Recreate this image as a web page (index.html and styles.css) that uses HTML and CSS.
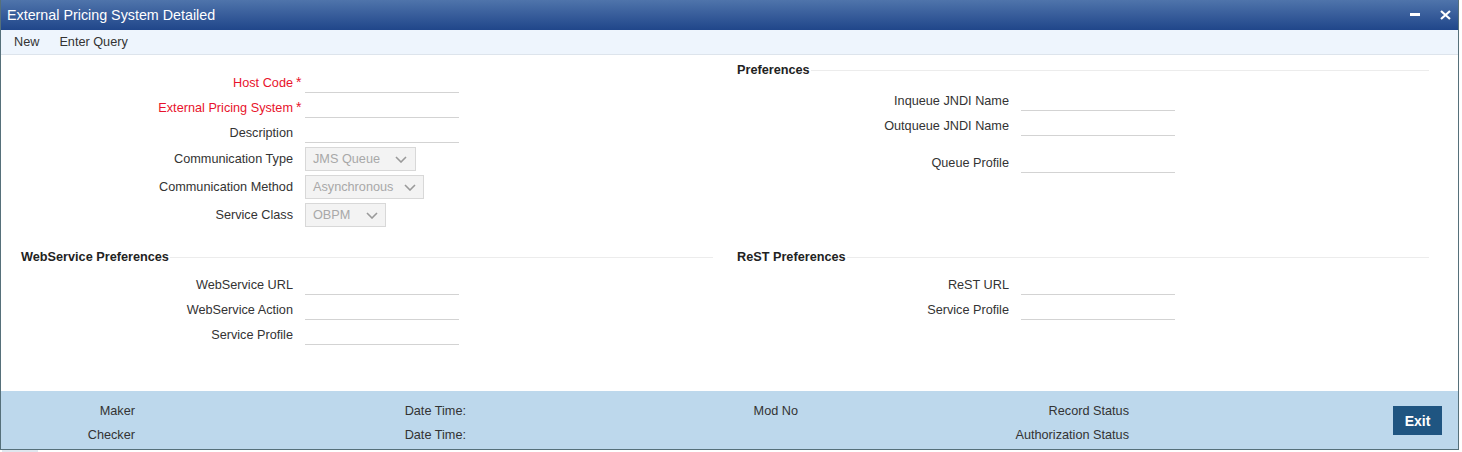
FILE: index.html
```html
<!DOCTYPE html>
<html lang="en">
<head>
<meta charset="utf-8">
<title>External Pricing System Detailed</title>
<link rel="stylesheet" href="styles.css">
</head>
<body>
<div class="window">
  <header class="titlebar">
    <span class="title">External Pricing System Detailed</span>
    <div class="win-controls">
      <svg class="ctl" width="10" height="10" viewBox="0 0 10 10"><rect x="0" y="3" width="10" height="3" fill="#fff"/></svg>
      <svg class="ctl" width="11" height="10" viewBox="0 0 11 10"><path d="M1 1 L10 9 M10 1 L1 9" stroke="#fff" stroke-width="2.2" fill="none"/></svg>
    </div>
  </header>
  <nav class="toolbar">
    <span>New</span>
    <span>Enter Query</span>
  </nav>
  <main class="content">
    <section class="col col-left main-fields">
      <div class="field"><span class="field-label required">Host Code</span><span class="req">*</span><span class="text-input"></span></div>
      <div class="field"><span class="field-label required">External Pricing System</span><span class="req">*</span><span class="text-input"></span></div>
      <div class="field"><span class="field-label">Description</span><span class="req"></span><span class="text-input"></span></div>
      <div class="field select-row"><span class="field-label">Communication Type</span><span class="req"></span>
        <span class="select select-type"><span>JMS Queue</span><svg width="12" height="7" viewBox="0 0 12 7"><polyline points="1,1 6,6 11,1" fill="none" stroke="#9a9a9a" stroke-width="1.6"/></svg></span></div>
      <div class="field select-row"><span class="field-label">Communication Method</span><span class="req"></span>
        <span class="select select-method"><span>Asynchronous</span><svg width="12" height="7" viewBox="0 0 12 7"><polyline points="1,1 6,6 11,1" fill="none" stroke="#9a9a9a" stroke-width="1.6"/></svg></span></div>
      <div class="field select-row"><span class="field-label">Service Class</span><span class="req"></span>
        <span class="select select-class"><span>OBPM</span><svg width="12" height="7" viewBox="0 0 12 7"><polyline points="1,1 6,6 11,1" fill="none" stroke="#9a9a9a" stroke-width="1.6"/></svg></span></div>
    </section>
    <section class="col col-right prefs">
      <h3 class="section-title">Preferences</h3>
      <div class="field"><span class="field-label">Inqueue JNDI Name</span><span class="req"></span><span class="text-input"></span></div>
      <div class="field"><span class="field-label">Outqueue JNDI Name</span><span class="req"></span><span class="text-input"></span></div>
      <div class="spacer"></div>
      <div class="field"><span class="field-label">Queue Profile</span><span class="req"></span><span class="text-input"></span></div>
    </section>
    <section class="col col-left">
      <h3 class="section-title">WebService Preferences</h3>
      <div class="field"><span class="field-label">WebService URL</span><span class="req"></span><span class="text-input"></span></div>
      <div class="field"><span class="field-label">WebService Action</span><span class="req"></span><span class="text-input"></span></div>
      <div class="field"><span class="field-label">Service Profile</span><span class="req"></span><span class="text-input"></span></div>
    </section>
    <section class="col col-right">
      <h3 class="section-title">ReST Preferences</h3>
      <div class="field"><span class="field-label">ReST URL</span><span class="req"></span><span class="text-input"></span></div>
      <div class="field"><span class="field-label">Service Profile</span><span class="req"></span><span class="text-input"></span></div>
    </section>
  </main>
  <footer class="audit">
    <span class="a-label">Maker</span><span></span>
    <span class="a-label">Date Time:</span><span></span>
    <span class="a-label">Mod No</span><span></span>
    <span class="a-label">Record Status</span>
    <button class="exit-btn" type="button">Exit</button>
    <span class="a-label">Checker</span><span></span>
    <span class="a-label">Date Time:</span><span></span>
    <span></span><span></span>
    <span class="a-label">Authorization Status</span>
  </footer>
</div>
<div class="tab"></div>
</body>
</html>
```
FILE: styles.css
```css
* { box-sizing: border-box; }

body {
  margin: 0;
  background: #fff;
  font-family: "Liberation Sans", Arial, sans-serif;
  color: #333;
}

.window {
  width: 1459px;
  height: 450px;
  border: 1px solid #56707a;
  border-top: none;
  display: flex;
  flex-direction: column;
}

.titlebar {
  height: 30px;
  flex: none;
  background: linear-gradient(#4f74ab, #20468a);
  color: #fff;
  display: flex;
  align-items: center;
  padding: 0 7px 0 6px;
}

.title { font-size: 14.3px; }

.win-controls {
  margin-left: auto;
  display: flex;
  align-items: center;
  gap: 20px;
}

.ctl { display: block; }

.toolbar {
  height: 25px;
  flex: none;
  background: #eef5fd;
  border-bottom: 1px solid #dde4ec;
  display: flex;
  align-items: center;
  gap: 20px;
  padding-left: 13px;
  font-size: 12.7px;
  color: #333;
}

.content {
  flex: 1;
  display: grid;
  grid-template-columns: 720px 1fr;
  align-content: start;
  align-items: start;
  font-size: 12.7px;
  background: #fff;
}

.col-left { padding: 0 8px 0 20px; }
.col-right { padding: 0 29px 0 16px; }

.main-fields { padding-top: 15px; padding-bottom: 20px; }
.prefs { padding-top: 7px; }

.section-title {
  margin: 0 0 7px;
  height: 16px;
  display: flex;
  align-items: center;
  font-size: 12.7px;
  font-weight: bold;
  color: #222;
}

.section-title::after {
  content: "";
  flex: 1;
  height: 1px;
  background: #ececec;
  margin-left: 1px;
}

.prefs .section-title { margin-bottom: 10px; }

.field {
  display: flex;
  align-items: center;
  height: 25px;
}

.field.select-row { height: 28px; }

.field-label {
  width: 272px;
  flex: none;
  text-align: right;
  white-space: nowrap;
  color: #333;
}

.field-label.required { color: #e8132c; }

.req {
  width: 12px;
  flex: none;
  align-self: flex-start;
  padding: 5px 0 0 3px;
  color: #e8132c;
  font-size: 14px;
  line-height: 14px;
}

.text-input {
  width: 154px;
  height: 21px;
  flex: none;
  border-bottom: 1px solid #d3d3d3;
}

.select {
  height: 24px;
  flex: none;
  background: #f3f3f3;
  border: 1px solid #d8d8d8;
  display: flex;
  align-items: center;
  justify-content: space-between;
  padding: 0 8px 0 7px;
  color: #a8a8a8;
}

.select-type { width: 111px; }
.select-method { width: 119px; padding-right: 7px; }
.select-class { width: 81px; padding-right: 7px; }

.select svg { display: block; }

.spacer { height: 12px; }

.audit {
  height: 58px;
  flex: none;
  background: #bdd8ec;
  display: grid;
  grid-template-columns: 134px 240px 91px 242px 90px 211px 120px 1fr;
  grid-template-rows: 24px 24px;
  align-items: center;
  padding: 8px 16px 0 0;
  font-size: 12.7px;
  color: #333;
}

.a-label {
  text-align: right;
  white-space: nowrap;
}

.exit-btn {
  grid-column: 8;
  grid-row: 1 / span 2;
  justify-self: end;
  align-self: start;
  margin-top: 7px;
  width: 49px;
  height: 29px;
  border: none;
  background: #1f5581;
  color: #fff;
  font-family: "Liberation Sans", Arial, sans-serif;
  font-weight: bold;
  font-size: 14px;
  padding: 0;
}

.tab {
  width: 36px;
  height: 2px;
  margin-left: 2px;
  background: #e0e7ef;
}
```
